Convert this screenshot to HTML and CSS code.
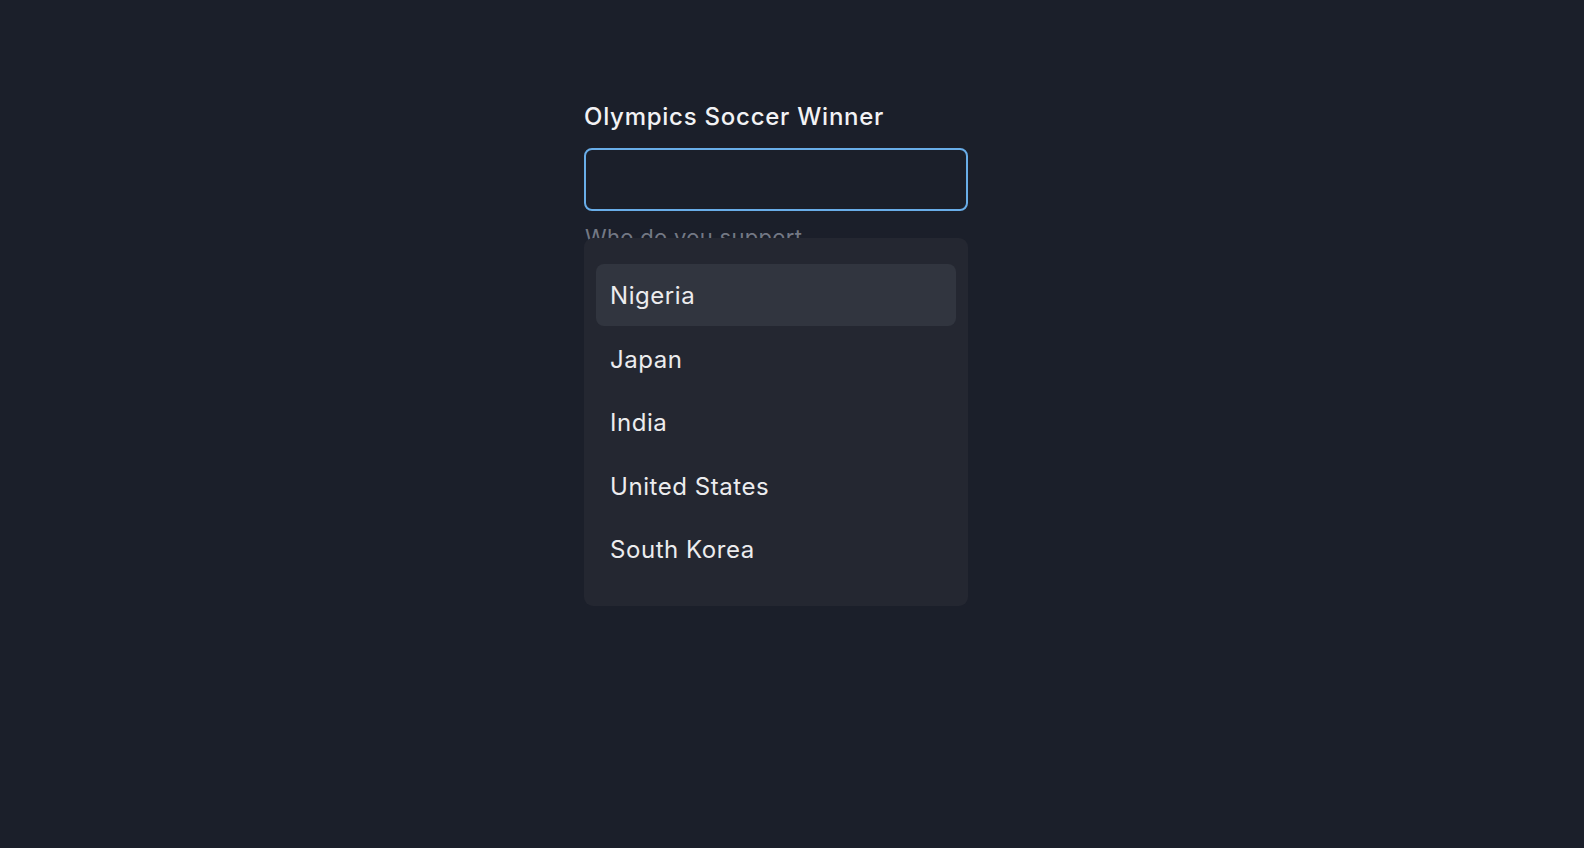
FILE: index.html
```html
<!DOCTYPE html>
<html lang="en">
<head>
<meta charset="utf-8">
<title>Olympics Soccer Winner</title>
<link rel="stylesheet" href="styles.css">
</head>
<body>
<main class="page">
  <div class="field">
    <label class="field-label" for="winner">Olympics Soccer Winner</label>
    <input class="field-input" id="winner" type="text" autocomplete="off">
    <p class="field-helper">Who do you support</p>
    <ul class="menu" role="listbox">
      <li class="menu-item is-active" role="option">Nigeria</li>
      <li class="menu-item" role="option">Japan</li>
      <li class="menu-item" role="option">India</li>
      <li class="menu-item" role="option">United States</li>
      <li class="menu-item" role="option">South Korea</li>
    </ul>
  </div>
</main>
</body>
</html>
```

FILE: styles.css
```css
html, body {
  margin: 0;
  padding: 0;
  height: 100%;
}

body {
  background: #1b1f2a;
  color: #ececee;
  font-family: Inter, "Noto Sans", sans-serif;
}

.page {
  display: flex;
  justify-content: center;
  padding: 99px 32px 0 0;
}

.field {
  position: relative;
  width: 384px;
  display: flex;
  flex-direction: column;
}

.field-label {
  font-size: 24px;
  font-weight: 450;
  line-height: 36px;
  letter-spacing: 0.75px;
  color: #f2f2f4;
  margin-bottom: 13px;
}

.field-input {
  box-sizing: border-box;
  height: 63px;
  width: 100%;
  margin: 0;
  background: #1b1f2a;
  border: 2px solid #69ade8;
  border-radius: 8px;
  outline: none;
  color: #ececee;
  font: inherit;
  font-size: 24px;
  padding: 0 16px;
}

.field-helper {
  margin: 9.5px 0 0;
  padding-left: 1px;
  font-size: 22px;
  line-height: 33px;
  letter-spacing: 0.3px;
  color: #737884;
}

.menu {
  position: absolute;
  top: 139px;
  left: 0;
  right: 0;
  margin: 0;
  padding: 26px 12px;
  list-style: none;
  background: #242731;
  border-radius: 9px;
  display: flex;
  flex-direction: column;
  gap: 1.5px;
}

.menu-item {
  height: 62px;
  line-height: 63px;
  padding: 0 14px;
  border-radius: 8px;
  font-size: 24px;
  letter-spacing: 0.55px;
  color: #ececee;
}

.menu-item.is-active {
  background: #31353f;
}
```
